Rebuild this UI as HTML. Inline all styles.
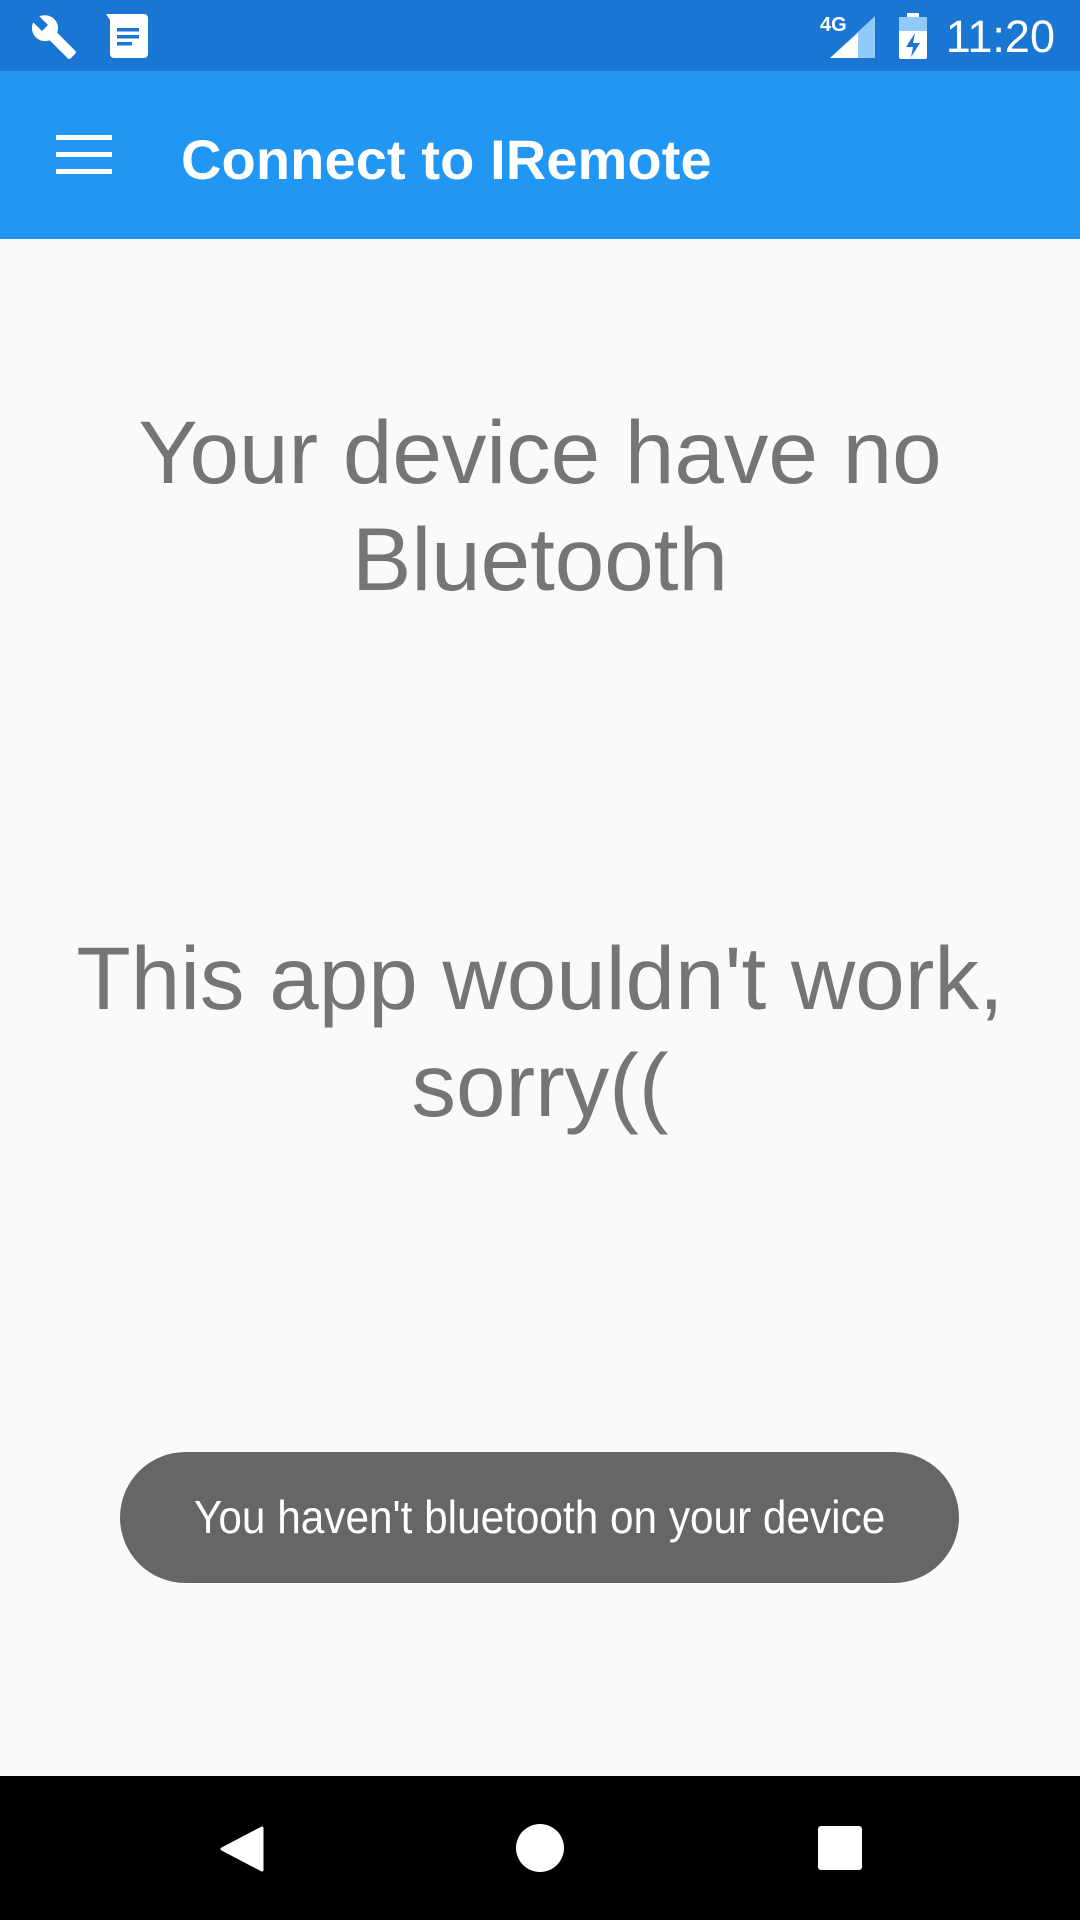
<!DOCTYPE html>
<html><head><meta charset="utf-8"><style>
*{margin:0;padding:0;box-sizing:border-box}
body{width:1080px;height:1920px;background:#fafafa;font-family:"Liberation Sans",sans-serif;position:relative;overflow:hidden}
.sb{position:absolute;left:0;top:0;width:1080px;height:71px;background:#1976d2}
.ab{position:absolute;left:0;top:71px;width:1080px;height:168px;background:#2196f3}
.title{position:absolute;left:181px;top:127px;color:#fff;font-size:56px;line-height:65px;font-weight:bold;letter-spacing:0.1px}
.t{position:absolute;left:0;width:1080px;text-align:center;color:#757575;font-size:89px;line-height:107px}
.toast{position:absolute;left:120px;top:1452px;width:839px;height:131px;border-radius:66px;background:#666;color:#fff;text-align:center;line-height:131px;font-size:46px}
.toast span{display:inline-block;transform:scaleX(.92)}
.nav{position:absolute;left:0;top:1776px;width:1080px;height:144px;background:#000}
.time{position:absolute;right:25px;top:12px;color:#fff;font-size:45px;line-height:50px}
</style></head><body>
<div class="sb">
<svg style="position:absolute;left:28px;top:13px" width="52" height="48" viewBox="0 0 24 24"><path fill="#fff" d="M22.7 19l-9.1-9.1c.9-2.3.4-5-1.5-6.9-2-2-5-2.4-7.4-1.3L9 6 6 9 1.6 4.7C.4 7.1.9 10.1 2.9 12.1c1.9 1.9 4.6 2.4 6.9 1.5l9.1 9.1c.4.4 1 .4 1.4 0l2.3-2.3c.5-.4.5-1.1.1-1.4z"/></svg>
<svg style="position:absolute;left:106px;top:14px" width="42" height="44" viewBox="0 0 42 44"><path fill="#fff" d="M0 0h38a4 4 0 0 1 4 4v36a4 4 0 0 1-4 4H8a4 4 0 0 1-4-4V6z"/><rect x="11" y="14" width="22" height="3.5" fill="#1976d2"/><rect x="11" y="21" width="22" height="3.5" fill="#1976d2"/><rect x="11" y="28" width="15" height="3.5" fill="#1976d2"/></svg>
<div style="position:absolute;left:820px;top:14px;color:#fff;font-size:20px;font-weight:bold">4G</div>
<svg style="position:absolute;left:830px;top:16px" width="45" height="42" viewBox="0 0 45 42"><path fill="#90caf9" d="M45 0v42H0z"/><path fill="#fff" d="M28 17v25H0z"/></svg>
<svg style="position:absolute;left:899px;top:13px" width="28" height="46" viewBox="0 0 28 46"><rect x="8" y="0" width="12" height="5" fill="#fff"/><rect x="0" y="4" width="28" height="42" rx="2" fill="#fff"/><rect x="0" y="4" width="28" height="14" fill="#90caf9"/><path fill="#1976d2" d="M16 20l-9 14h7l-2 10 9-14h-7z"/></svg>
<div class="time">11:20</div>
</div>
<div class="ab">
<div style="position:absolute;left:56px;top:64px;width:56px;height:5px;background:#fff"></div>
<div style="position:absolute;left:56px;top:81px;width:56px;height:5px;background:#fff"></div>
<div style="position:absolute;left:56px;top:98px;width:56px;height:5px;background:#fff"></div>
</div>
<div class="title">Connect to IRemote</div>
<div class="t" style="top:399px">Your device have no<br>Bluetooth</div>
<div class="t" style="top:925px">This app wouldn't work,<br>sorry((</div>
<div class="toast"><span>You haven't bluetooth on your device</span></div>
<div class="nav">
<svg style="position:absolute;left:218px;top:1826px;position:fixed" width="46" height="46" viewBox="0 0 46 46"><path fill="#fff" d="M44 2v42L4 23z" stroke="#fff" stroke-width="3" stroke-linejoin="round"/></svg>
<div style="position:fixed;left:516px;top:1824px;width:48px;height:48px;border-radius:50%;background:#fff"></div>
<div style="position:fixed;left:818px;top:1826px;width:44px;height:44px;border-radius:3px;background:#fff"></div>
</div>
</body></html>
